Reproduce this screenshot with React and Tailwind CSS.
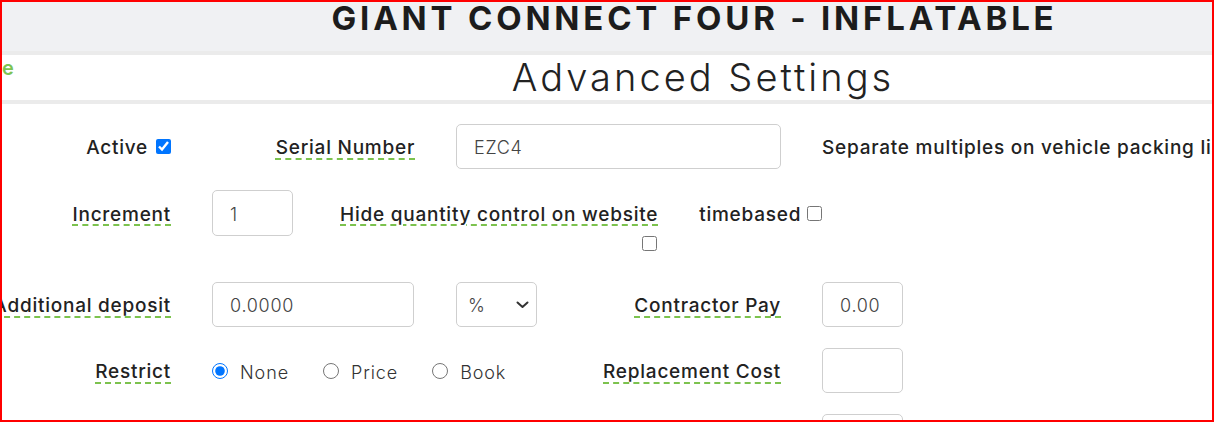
import React from "react";

const Label = ( { children } ) => (
    <span className="pt-[4px] whitespace-nowrap font-medium tracking-[0.04em] text-[#222] underline decoration-dashed decoration-[#7cc24e] decoration-2 underline-offset-[4px]">
        { children }
    </span>
);

const Plain = ( { children } ) => (
    <span className="pt-[4px] whitespace-nowrap font-medium tracking-[0.04em] text-[#222]">{ children }</span>
);

const TextBox = ( { value, className = "" } ) => (
    <div className={ `h-[45px] border border-[#cfcfcf] rounded-[5px] bg-white flex items-center pl-[17px] pt-[2px] text-[18px] font-light tracking-[0.04em] text-[#444] ${ className }` }>
        { value }
    </div>
);

const Radio = ( { label, checked } ) => (
    <label className="flex items-center gap-[12px] text-[18px] font-light tracking-[0.05em] text-[#333]">
        <input type="radio" name="restrict" defaultChecked={ checked } className="w-[16px] h-[16px] m-0 accent-[#0075ff]" />
        <span className="pt-[3px]">{ label }</span>
    </label>
);

const App = () =>
{
    return (
        <div className="w-[1214px] h-[422px] overflow-hidden border-2 border-[#ff0000] bg-white font-['Inter',sans-serif] text-[19px]">
            <div className="h-[49px] bg-[#f0f1f3] flex justify-center pl-[175px]">
                <h1 className="text-[33px] leading-[32px] font-bold tracking-[0.115em] text-[#1c1c1c] whitespace-nowrap">
                    GIANT CONNECT FOUR - INFLATABLE
                </h1>
            </div>
            <div className="h-[4px] bg-[#ebebeb]" />
            <div className="h-[45px] flex">
                <span className="w-[12px] text-[20px] leading-[20px] mt-[3px] font-semibold text-[#7dc352]">e</span>
                <h2 className="flex-1 text-center pl-[180px] text-[38px] leading-[45px] font-light tracking-[0.08em] text-[#222] whitespace-nowrap">
                    Advanced Settings
                </h2>
            </div>
            <div className="h-[4px] bg-[#ebebeb]" />

            <div className="pt-[20px] flex flex-col gap-[21px]">
                <div className="grid grid-cols-[169px_203px_325px_1fr] gap-x-[41px] items-center h-[45px]">
                    <div className="flex justify-end items-center gap-[8px]">
                        <Plain>Active</Plain>
                        <input type="checkbox" defaultChecked className="w-[15px] h-[15px] m-0 accent-[#0075ff]" />
                    </div>
                    <div className="flex justify-end">
                        <Label>Serial Number</Label>
                    </div>
                    <TextBox value="EZC4" />
                    <Plain>Separate multiples on vehicle packing list</Plain>
                </div>

                <div className="grid grid-cols-[169px_1fr] gap-x-[41px] items-start">
                    <div className="h-[46px] flex justify-end items-center">
                        <Label>Increment</Label>
                    </div>
                    <div className="flex items-start">
                        <TextBox value="1" className="w-[81px] h-[46px]" />
                        <div className="ml-[47px] flex flex-col items-end pb-[10px]">
                            <div className="h-[46px] flex items-center">
                                <Label>Hide quantity control on website</Label>
                            </div>
                            <input type="checkbox" className="w-[15px] h-[15px] m-0 mr-[1px]" />
                        </div>
                        <div className="ml-[41px] h-[46px] flex items-center gap-[6px]">
                            <Plain>timebased</Plain>
                            <input type="checkbox" className="w-[15px] h-[15px] m-0" />
                        </div>
                    </div>
                </div>

                <div className="grid grid-cols-[169px_203px_325px_1fr] gap-x-[41px] items-center h-[45px]">
                    <div className="flex justify-end">
                        <Label>Additional deposit</Label>
                    </div>
                    <TextBox value="0.0000" className="w-[202px]" />
                    <div className="flex items-center justify-between">
                        <div className="w-[81px] h-[45px] border border-[#cfcfcf] rounded-[5px] flex items-center justify-between pl-[11px] pr-[7px] text-[18px] font-light text-[#444]">
                            <span className="pt-[2px]">%</span>
                            <svg width="13" height="8" viewBox="0 0 13 8" fill="none">
                                <path d="M1.5 1.5 L6.5 6 L11.5 1.5" stroke="#333" strokeWidth="2" strokeLinecap="round" strokeLinejoin="round" />
                            </svg>
                        </div>
                        <Label>Contractor Pay</Label>
                    </div>
                    <TextBox value="0.00" className="w-[81px]" />
                </div>

                <div className="grid grid-cols-[169px_569px_1fr] gap-x-[41px] items-center h-[45px]">
                    <div className="flex justify-end">
                        <Label>Restrict</Label>
                    </div>
                    <div className="flex items-center justify-between">
                        <div className="flex items-center gap-[34px]">
                            <Radio label="None" checked />
                            <Radio label="Price" />
                            <Radio label="Book" />
                        </div>
                        <Label>Replacement Cost</Label>
                    </div>
                    <TextBox value="" className="w-[81px]" />
                </div>

                <div className="grid grid-cols-[169px_569px_1fr] gap-x-[41px] h-[45px]">
                    <div />
                    <div />
                    <TextBox value="" className="w-[81px]" />
                </div>
            </div>
        </div>
    );
};

export default App;
